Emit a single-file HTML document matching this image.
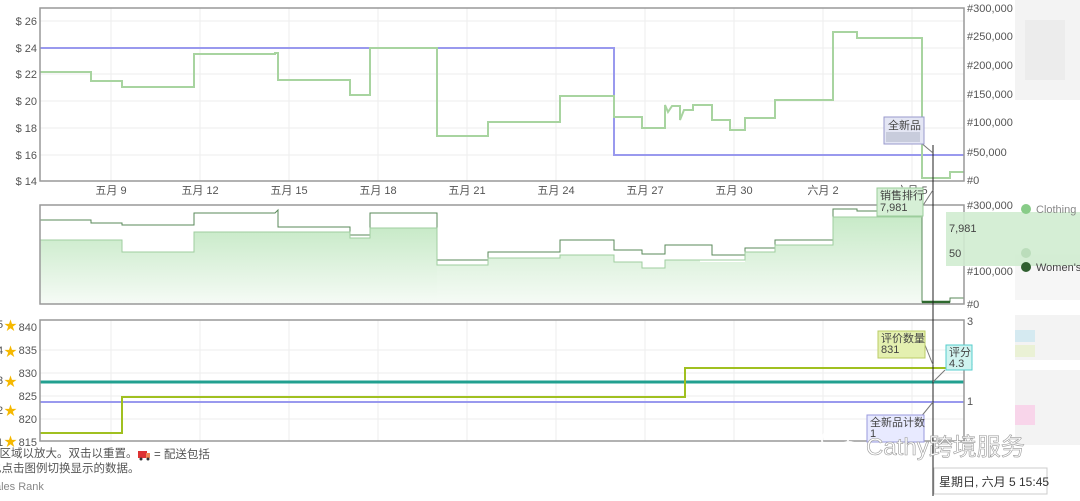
<!DOCTYPE html>
<html><head><meta charset="utf-8"><style>
body{margin:0;width:1080px;height:496px;overflow:hidden;background:#fff;font-family:"Liberation Sans","Noto Sans CJK SC",sans-serif;}
svg text{font-family:"Liberation Sans","Noto Sans CJK SC",sans-serif;font-size:11px;fill:#555}
</style></head><body>
<svg width="1080" height="496" viewBox="0 0 1080 496">
<!-- right blurred -->
<g opacity="0.4">
<rect x="1015" y="0" width="65" height="100" fill="#e2e2e2"/>
<rect x="1025" y="20" width="40" height="60" fill="#d0d0d0"/>
<rect x="1015" y="240" width="65" height="60" fill="#eaeaea"/>
<rect x="1015" y="315" width="65" height="45" fill="#e2e2e2"/>
<rect x="1015" y="330" width="20" height="12" fill="#9cd"/>
<rect x="1015" y="345" width="20" height="12" fill="#cd9"/>
<rect x="1015" y="370" width="65" height="75" fill="#e2e2e2"/>
<rect x="1015" y="405" width="20" height="20" fill="#e9c"/>
</g>
<!-- chart1 grid -->
<g stroke="#eee">
<line x1="40" y1="21" x2="964" y2="21"/><line x1="40" y1="48" x2="964" y2="48"/><line x1="40" y1="74" x2="964" y2="74"/><line x1="40" y1="101" x2="964" y2="101"/><line x1="40" y1="128" x2="964" y2="128"/><line x1="40" y1="155" x2="964" y2="155"/>
<line x1="111" y1="8" x2="111" y2="181"/><line x1="200" y1="8" x2="200" y2="181"/><line x1="289" y1="8" x2="289" y2="181"/><line x1="378" y1="8" x2="378" y2="181"/><line x1="467" y1="8" x2="467" y2="181"/><line x1="556" y1="8" x2="556" y2="181"/><line x1="645" y1="8" x2="645" y2="181"/><line x1="734" y1="8" x2="734" y2="181"/><line x1="823" y1="8" x2="823" y2="181"/><line x1="912" y1="8" x2="912" y2="181"/>
</g>
<polyline fill="none" stroke="#9999ee" stroke-width="2" points="40,48 614,48 614,155 964,155"/>
<polyline fill="none" stroke="#a8d4a0" stroke-width="2" points="40,72 91,72 91,81 122,81 122,87 194,87 194,54 275,54 275,53 278,53 278,80 350,80 350,95 370,95 370,48 437,48 437,136 488,136 488,122 560,122 560,96 614,96 614,117 642,117 642,128 665,128 665,105 668,112 672,106 680,106 680,120 684,110 693,110 693,105 712,105 712,120 730,120 730,130 745,130 745,118 775,118 775,100 833,100 833,32 857,32 857,38 922,38 922,178 950,178 950,172 964,172"/>
<rect x="40" y="8" width="924" height="173" fill="none" stroke="#999" stroke-width="1.5"/>
<g text-anchor="end"><text x="37" y="25">$ 26</text><text x="37" y="52">$ 24</text><text x="37" y="78">$ 22</text><text x="37" y="105">$ 20</text><text x="37" y="132">$ 18</text><text x="37" y="159">$ 16</text><text x="37" y="185">$ 14</text></g>
<g><text x="967" y="12">#300,000</text><text x="967" y="40">#250,000</text><text x="967" y="69">#200,000</text><text x="967" y="98">#150,000</text><text x="967" y="126">#100,000</text><text x="967" y="156">#50,000</text><text x="967" y="184">#0</text></g>
<g text-anchor="middle"><text x="111" y="194">五月 9</text><text x="200" y="194">五月 12</text><text x="289" y="194">五月 15</text><text x="378" y="194">五月 18</text><text x="467" y="194">五月 21</text><text x="556" y="194">五月 24</text><text x="645" y="194">五月 27</text><text x="734" y="194">五月 30</text><text x="823" y="194">六月 2</text><text x="912" y="194">六月 5</text></g>
<!-- chart2 -->
<defs><linearGradient id="g" x1="0" y1="0" x2="0" y2="1"><stop offset="0" stop-color="#c8eac8"/><stop offset="1" stop-color="#f6fbf6"/></linearGradient></defs>
<polygon fill="url(#g)" points="40,240 122,240 122,252 194,252 194,232 278,232 278,232 350,232 350,238 370,238 370,228 437,228 437,304 40,304"/>
<polygon fill="url(#g)" points="437,265 488,265 488,258 560,258 560,255 614,255 614,262 642,262 642,268 665,268 665,260 700,260 700,262 745,262 745,252 775,252 775,245 833,245 833,217 922,217 922,304 437,304"/>
<polyline fill="none" stroke="#5a8a5a" stroke-width="1" points="40,220 91,220 91,223 122,223 122,225 194,225 194,213 275,213 278,210 278,227 350,227 350,235 370,235 370,213 437,213 437,260 488,260 488,252 560,252 560,240 614,240 614,250 642,250 642,254 665,254 665,245 712,245 712,255 745,255 745,248 775,248 775,240 833,240 833,209 857,209 857,211 922,211 922,302 950,302 950,298 964,298"/>
<polyline fill="none" stroke="#9fce9f" stroke-width="1" points="40,240 122,240 122,252 194,252 194,232 350,232 350,238 370,238 370,228 437,228 437,265 488,265 488,258 560,258 560,255 614,255 614,262 642,262 642,268 665,268 665,260 745,260 745,252 775,252 775,245 833,245 833,217 922,217"/>
<line x1="922" y1="302" x2="950" y2="302" stroke="#2f6a2f" stroke-width="2.5"/>
<rect x="40" y="205" width="924" height="99" fill="none" stroke="#999" stroke-width="1.5"/>
<text x="967" y="209">#300,000</text><text x="967" y="275">#100,000</text><text x="967" y="308">#0</text>
<!-- chart3 -->
<g stroke="#eee"><line x1="40" y1="350" x2="964" y2="350"/><line x1="40" y1="373" x2="964" y2="373"/><line x1="40" y1="396" x2="964" y2="396"/><line x1="40" y1="419" x2="964" y2="419"/><line x1="111" y1="320" x2="111" y2="441"/><line x1="200" y1="320" x2="200" y2="441"/><line x1="289" y1="320" x2="289" y2="441"/><line x1="378" y1="320" x2="378" y2="441"/><line x1="467" y1="320" x2="467" y2="441"/><line x1="556" y1="320" x2="556" y2="441"/><line x1="645" y1="320" x2="645" y2="441"/><line x1="734" y1="320" x2="734" y2="441"/><line x1="823" y1="320" x2="823" y2="441"/><line x1="912" y1="320" x2="912" y2="441"/></g>
<line x1="40" y1="382" x2="964" y2="382" stroke="#22a090" stroke-width="3"/>
<line x1="40" y1="402" x2="964" y2="402" stroke="#9999ee" stroke-width="2"/>
<polyline fill="none" stroke="#a0c020" stroke-width="2" points="40,433 122,433 122,397 685,397 685,368 964,368"/>
<rect x="40" y="320" width="924" height="121" fill="none" stroke="#999" stroke-width="1.5"/>
<g text-anchor="end"><text x="37" y="331">840</text><text x="37" y="354">835</text><text x="37" y="377">830</text><text x="37" y="400">825</text><text x="37" y="423">820</text><text x="37" y="446">815</text></g>
<text x="4" y="330" style="fill:#f5b800;font-size:13px">★</text><text x="4" y="356" style="fill:#f5b800;font-size:13px">★</text><text x="4" y="386" style="fill:#f5b800;font-size:13px">★</text><text x="4" y="415" style="fill:#f5b800;font-size:13px">★</text><text x="4" y="446" style="fill:#f5b800;font-size:13px">★</text>
<text x="-3" y="328">5</text><text x="-3" y="354">4</text><text x="-3" y="384">3</text><text x="-3" y="414">2</text><text x="-3" y="446">1</text>
<text x="967" y="325">3</text><text x="967" y="365" style="fill:#aaa">2</text><text x="967" y="405">1</text>
<text x="-12" y="457" style="font-size:11.5px">择区域以放大。双击以重置。</text><text x="-10" y="472" style="font-size:11.5px">也点击图例切换显示的数据。</text><text x="-5" y="490" style="fill:#888">ales Rank</text>
<rect x="138" y="451" width="9" height="7" fill="#d33"/><rect x="146" y="453" width="4" height="5" fill="#e85"/><circle cx="141" cy="459" r="1.5" fill="#333"/><circle cx="148" cy="459" r="1.5" fill="#333"/>
<text x="154" y="458" style="font-size:11.5px">= 配送包括</text>
<!-- crosshair -->
<line x1="933" y1="145" x2="933" y2="496" stroke="#222" stroke-width="1"/>
<line x1="920" y1="142" x2="933" y2="153" stroke="#777"/><line x1="920" y1="210" x2="933" y2="190" stroke="#777"/><line x1="925" y1="345" x2="933" y2="365" stroke="#777"/><line x1="945" y1="370" x2="933" y2="382" stroke="#777"/><line x1="920" y1="418" x2="933" y2="402" stroke="#777"/>
<!-- tooltips -->
<rect x="884" y="117" width="40" height="27" fill="#e4e6f4" stroke="#99c" /><text x="888" y="129" style="fill:#444">全新品</text><rect x="886" y="132" width="34" height="10" fill="#c8ccdc"/>
<rect x="877" y="188" width="46" height="28" fill="#d6efd6" stroke="#9c9"/><text x="880" y="199" style="fill:#444">销售排行</text><text x="880" y="211" style="fill:#444">7,981</text>
<rect x="946" y="212" width="134" height="54" fill="#d0ecd0" opacity="0.9"/><text x="949" y="232" style="fill:#444">7,981</text><text x="949" y="257" style="fill:#444">50</text>
<circle cx="1026" cy="209" r="5" fill="#8c8"/><text x="1036" y="213" style="fill:#888">Clothing</text><circle cx="1026" cy="253" r="5" fill="#bdb"/><circle cx="1026" cy="267" r="5" fill="#2f5f2f"/><text x="1036" y="271" style="fill:#444">Women's</text>
<rect x="878" y="331" width="47" height="27" fill="#e4f0b0" stroke="#bc6"/><text x="881" y="342" style="fill:#444">评价数量</text><text x="881" y="353" style="fill:#444">831</text>
<rect x="946" y="345" width="26" height="25" fill="#d0f4f0" stroke="#5cc"/><text x="949" y="356" style="fill:#444">评分</text><text x="949" y="367" style="fill:#444">4.3</text>
<rect x="867" y="415" width="57" height="27" fill="#e8eaff" stroke="#99d"/><text x="870" y="426" style="fill:#444">全新品计数</text><text x="870" y="437" style="fill:#444">1</text>
<rect x="934" y="468" width="113" height="26" fill="#fff" stroke="#ccc"/><text x="939" y="486" style="fill:#333;font-size:12px">星期日, 六月 5 15:45</text>
<!-- watermark -->
<g fill="none" stroke="#fff" stroke-width="2" opacity="0.9"><ellipse cx="835" cy="440" rx="13" ry="11"/><ellipse cx="849" cy="451" rx="11" ry="9"/></g>
<text x="866" y="455" style="font-size:24px;fill:#fff;stroke:#999;stroke-width:0.6">Cathy跨境服务</text>
</svg>
</body></html>
